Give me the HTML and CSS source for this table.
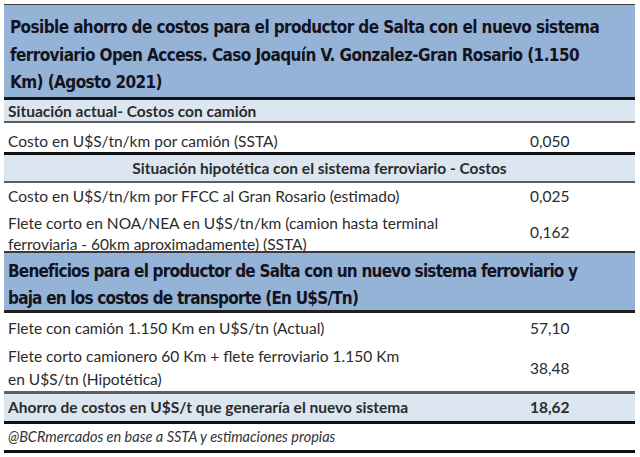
FILE: index.html
```html
<!DOCTYPE html>
<html lang="es">
<head>
<meta charset="utf-8">
<title>Ahorro de costos</title>
<link rel="stylesheet" href="styles.css">
</head>
<body>
<div class="sheet">
  <div class="title">Posible ahorro de costos para el productor de Salta con el nuevo sistema<br>ferroviario Open Access. Caso Joaquín V. Gonzalez-Gran Rosario (1.150<br>Km) (Agosto 2021)</div>
  <div class="row sec r-act line-grey">Situación actual- Costos con camión</div>
  <div class="row item r-cam line-black"><span class="lbl">Costo en U$S/tn/km por camión (SSTA)</span><span class="val">0,050</span></div>
  <div class="row sec center r-hip line-grey">Situación hipotética con el sistema ferroviario - Costos</div>
  <div class="row item r-ffcc"><span class="lbl">Costo en U$S/tn/km por FFCC al Gran Rosario (estimado)</span><span class="val">0,025</span></div>
  <div class="row item r-corto line-dark"><span class="lbl">Flete corto en NOA/NEA en U$S/tn/km (camion hasta terminal<br>ferroviaria - 60km aproximadamente) (SSTA)</span><span class="val">0,162</span></div>
  <div class="subtitle">Beneficios para el productor de Salta con un nuevo sistema ferroviario y<br>baja en los costos de transporte (En U$S/Tn)</div>
  <div class="row item r-flete"><span class="lbl">Flete con camión 1.150 Km en U$S/tn (Actual)</span><span class="val">57,10</span></div>
  <div class="row item r-flete2 line-grey2"><span class="lbl">Flete corto camionero 60 Km + flete ferroviario 1.150 Km<br>en U$S/tn (Hipotética)</span><span class="val">38,48</span></div>
  <div class="row item sec r-ahorro line-black"><span class="lbl">Ahorro de costos en U$S/t que generaría el nuevo sistema</span><span class="val">18,62</span></div>
  <div class="row foot line-black">@BCRmercados en base a SSTA y estimaciones propias</div>
</div>
</body>
</html>
```
FILE: styles.css
```css
html, body {
  margin: 0;
  padding: 0;
  background: #ffffff;
}
.sheet {
  margin: 4px 0 0 4px;
  width: 631px;
  border-top: 1px solid #3a3a3a;
  font-family: "Lato", "Liberation Sans", sans-serif;
  font-size: 15.5px;
  color: #2b2b2b;
}
.title,
.subtitle {
  box-sizing: border-box;
  background: #95b3d7;
  font-family: "DejaVu Sans Condensed", "DejaVu Sans", sans-serif;
  font-stretch: condensed;
  font-weight: bold;
  white-space: nowrap;
  color: #14141f;
}
.title {
  font-size: 17px;
  letter-spacing: -0.6px;
  line-height: 27.5px;
  padding: 9px 6px 0 6px;
  height: 95px;
  border-bottom: 3px solid #151515;
}
.subtitle {
  font-size: 17px;
  letter-spacing: -0.8px;
  line-height: 27px;
  padding: 5px 4px 0 4px;
  height: 60px;
  border-bottom: 3px solid #202020;
}
.row {
  box-sizing: border-box;
  padding: 0 4px;
}
.sec {
  background: #dce6f1;
  font-weight: bold;
}
.center {
  text-align: center;
}
.item {
  display: grid;
  grid-template-columns: 1fr 101px;
  align-items: start;
}
.lbl,
.val {
  line-height: 21px;
}
.line-grey { border-bottom: 2px solid #5e5e5e; }
.line-grey2 { border-bottom: 3px solid #606060; }
.line-dark { border-bottom: 2px solid #3a3a3a; }
.line-black { border-bottom: 3px solid #111111; }

.r-act { height: 23px; padding-top: 1px; line-height: 21px; }
.r-cam { height: 32px; padding-top: 8px; }
.r-hip { height: 28px; line-height: 26px; }
.r-ffcc { height: 24px; padding-top: 3px; }
.r-corto { height: 46px; padding-top: 6px; }
.r-corto .val { padding-top: 9px; }
.r-flete { height: 30px; padding-top: 5px; }
.r-flete2 { height: 51px; padding-top: 2px; }
.r-flete2 .lbl { line-height: 23px; }
.r-flete2 .val { line-height: 23px; padding-top: 12px; }
.r-ahorro { height: 30px; padding-top: 3px; }
.foot {
  height: 29px;
  line-height: 26px;
  font-style: italic;
  font-size: 14.5px;
  color: #333333;
}
```
